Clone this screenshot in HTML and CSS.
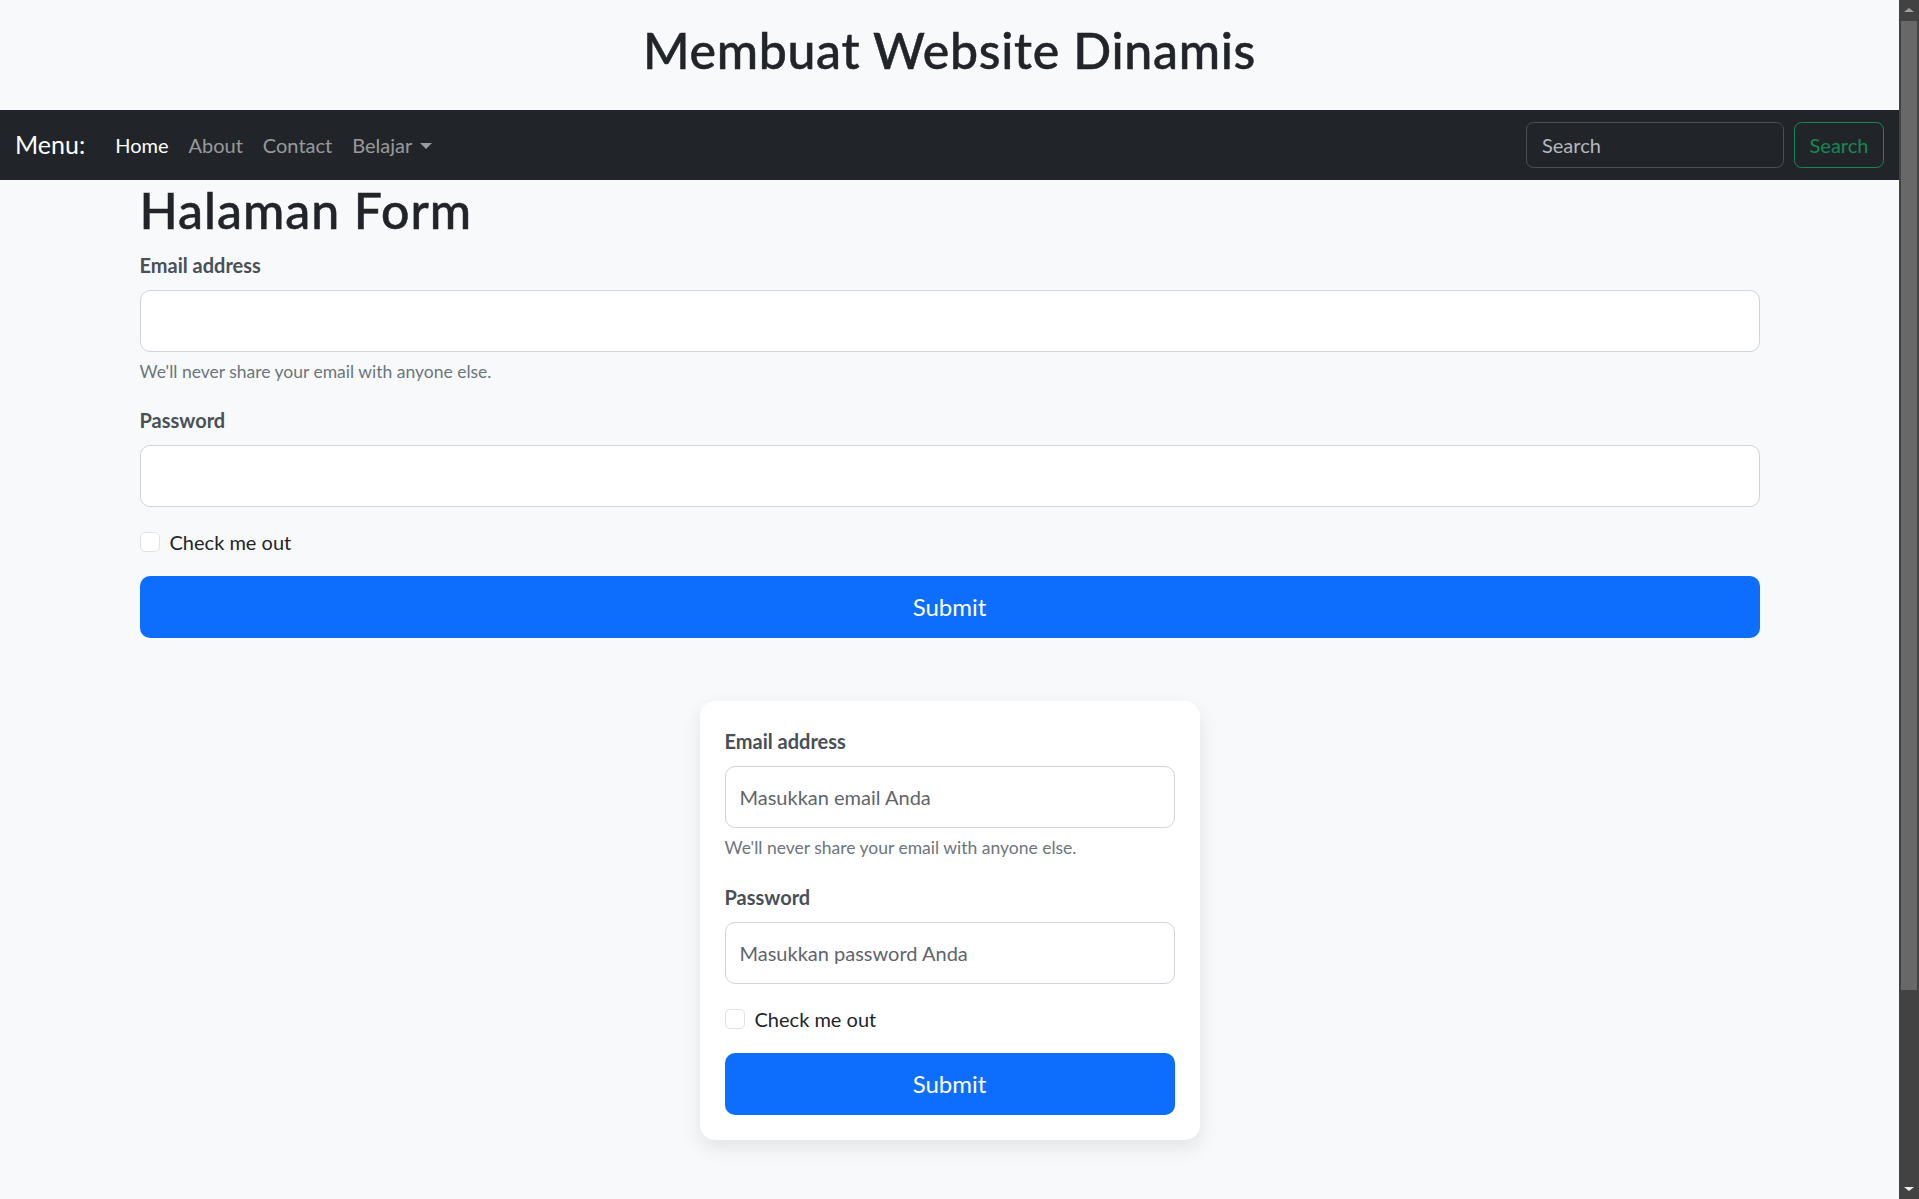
FILE: index.html
```html
<!DOCTYPE html>
<html lang="id">
<head>
<meta charset="utf-8">
<title>Membuat Website Dinamis</title>
<link rel="stylesheet" href="styles.css">
</head>
<body>
<div class="page">
  <h1 class="site-title">Membuat Website Dinamis</h1>

  <nav class="navbar">
    <a class="brand" href="#">Menu:</a>
    <ul class="nav">
      <li><a class="nav-link active" href="#">Home</a></li>
      <li><a class="nav-link" href="#">About</a></li>
      <li><a class="nav-link" href="#">Contact</a></li>
      <li><a class="nav-link dropdown" href="#">Belajar</a></li>
    </ul>
    <form class="search">
      <input class="search-input" type="search" placeholder="Search">
      <button class="search-btn" type="button">Search</button>
    </form>
  </nav>

  <main class="container">
    <h1 class="page-title">Halaman Form</h1>
    <form class="form">
      <div class="group">
        <label class="label">Email address</label>
        <input class="field" type="email">
        <div class="help">We'll never share your email with anyone else.</div>
      </div>
      <div class="group">
        <label class="label">Password</label>
        <input class="field" type="password">
      </div>
      <div class="check">
        <input class="check-input" type="checkbox">
        <label class="check-label">Check me out</label>
      </div>
      <button class="submit" type="button">Submit</button>
    </form>

    <div class="card">
      <form class="form">
        <div class="group">
          <label class="label">Email address</label>
          <input class="field" type="email" placeholder="Masukkan email Anda">
          <div class="help">We'll never share your email with anyone else.</div>
        </div>
        <div class="group">
          <label class="label">Password</label>
          <input class="field" type="password" placeholder="Masukkan password Anda">
        </div>
        <div class="check">
          <input class="check-input" type="checkbox">
          <label class="check-label">Check me out</label>
        </div>
        <button class="submit" type="button">Submit</button>
      </form>
    </div>
  </main>
</div>

<div class="scrollbar">
  <div class="sb-btn sb-up"><span class="tri-up"></span></div>
  <div class="sb-track"><div class="sb-thumb"></div></div>
  <div class="sb-btn sb-down"><span class="tri-down"></span></div>
</div>
</body>
</html>
```
FILE: styles.css
```css
* { box-sizing: border-box; }

html, body {
  height: 100%;
  margin: 0;
  overflow: hidden;
}

body {
  display: flex;
  background: #f8f9fa;
  color: #212529;
  font-family: Lato, "Liberation Sans", sans-serif;
  font-size: 20px;
  line-height: 1.5;
}

.page {
  flex: 1;
  min-width: 0;
  overflow: hidden;
}

/* title */
.site-title {
  margin: 0 0 10px;
  padding: 20px;
  font-size: 50px;
  line-height: 60px;
  font-weight: 500;
  letter-spacing: 0.7px;
  -webkit-text-stroke: 0.5px currentColor;
  text-align: center;
}

/* navbar */
.navbar {
  height: 70px;
  background: #212529;
  display: flex;
  align-items: center;
  padding: 0 15px;
}

.brand {
  font-size: 25px;
  line-height: 37.5px;
  color: #fff;
  text-decoration: none;
  margin-right: 20px;
}

.nav {
  list-style: none;
  margin: 0;
  padding: 0;
  display: flex;
}

.nav-link {
  display: block;
  padding: 10px 10px;
  line-height: 30px;
  color: rgba(255, 255, 255, 0.55);
  text-decoration: none;
}

.nav-link.active { color: #fff; }

.dropdown::after {
  content: "";
  display: inline-block;
  margin-left: 8px;
  vertical-align: 4px;
  border-top: 6px solid;
  border-right: 6px solid transparent;
  border-left: 6px solid transparent;
}

.search {
  margin: 0 0 0 auto;
  display: flex;
  gap: 10px;
}

.search-input {
  width: 258px;
  height: 46px;
  padding: 0 15px;
  background: #212529;
  border: 1.25px solid #495057;
  border-radius: 7.5px;
  color: #dee2e6;
  font: inherit;
  font-size: 20px;
}

.search-input::placeholder { color: #b4b8bc; }

.search-btn {
  height: 46px;
  width: 90px;
  padding: 0;
  background: transparent;
  border: 1.25px solid #198754;
  border-radius: 7.5px;
  color: #198754;
  font: inherit;
  font-size: 20px;
}

/* content */
.container {
  width: 1620px;
  margin: 0 auto;
  padding-bottom: 300px;
}

.page-title {
  margin: 0 0 10px;
  font-size: 50px;
  line-height: 60px;
  font-weight: 500;
  letter-spacing: 1px;
  -webkit-text-stroke: 0.5px currentColor;
}

.form { margin: 0; }

.group { margin-bottom: 20px; }

.label {
  display: block;
  margin-bottom: 10px;
  font-weight: 700;
  color: #495057;
  line-height: 30px;
}

.field {
  display: block;
  width: 100%;
  height: 62px;
  padding: 0 14px;
  background: #fff;
  border: 1.25px solid #cfd4da;
  border-radius: 10px;
  font: inherit;
  font-size: 20px;
  color: #212529;
}

.field::placeholder { color: #5f656b; }

.help {
  margin-top: 7px;
  font-size: 17.5px;
  line-height: 26.25px;
  color: #6c757d;
}

.check {
  display: flex;
  align-items: flex-start;
  min-height: 30px;
  margin-bottom: 19px;
}

.check-input {
  appearance: none;
  -webkit-appearance: none;
  width: 20px;
  height: 20px;
  margin: 5px 10px 0 0;
  background: #fff;
  border: 1.25px solid #dee2e6;
  border-radius: 5px;
  flex: none;
}

.check-label { line-height: 30px; }

.submit {
  display: block;
  width: 100%;
  height: 62px;
  background: #0d6efd;
  border: none;
  border-radius: 10px;
  color: #fff;
  font: inherit;
  font-size: 24px;
}

/* card */
.card {
  width: 500px;
  margin: 63px auto 0;
  padding: 25px;
  background: #fff;
  border-radius: 15px;
  box-shadow: 0 8px 20px rgba(0, 0, 0, 0.09);
}

/* fake window scrollbar */
.scrollbar {
  width: 20px;
  flex: none;
  height: 100%;
  background: #424242;
  display: flex;
  flex-direction: column;
}

.sb-btn {
  height: 20px;
  flex: none;
  display: flex;
  justify-content: center;
  align-items: center;
}

.sb-track {
  flex: 1;
  padding: 1px 2px;
}

.sb-thumb {
  height: 969px;
  background: #686868;
}

.tri-up {
  border-bottom: 4px solid #a0a0a0;
  border-left: 5px solid transparent;
  border-right: 5px solid transparent;
}

.tri-down {
  border-top: 4px solid #f0f0f0;
  border-left: 5px solid transparent;
  border-right: 5px solid transparent;
}
```
